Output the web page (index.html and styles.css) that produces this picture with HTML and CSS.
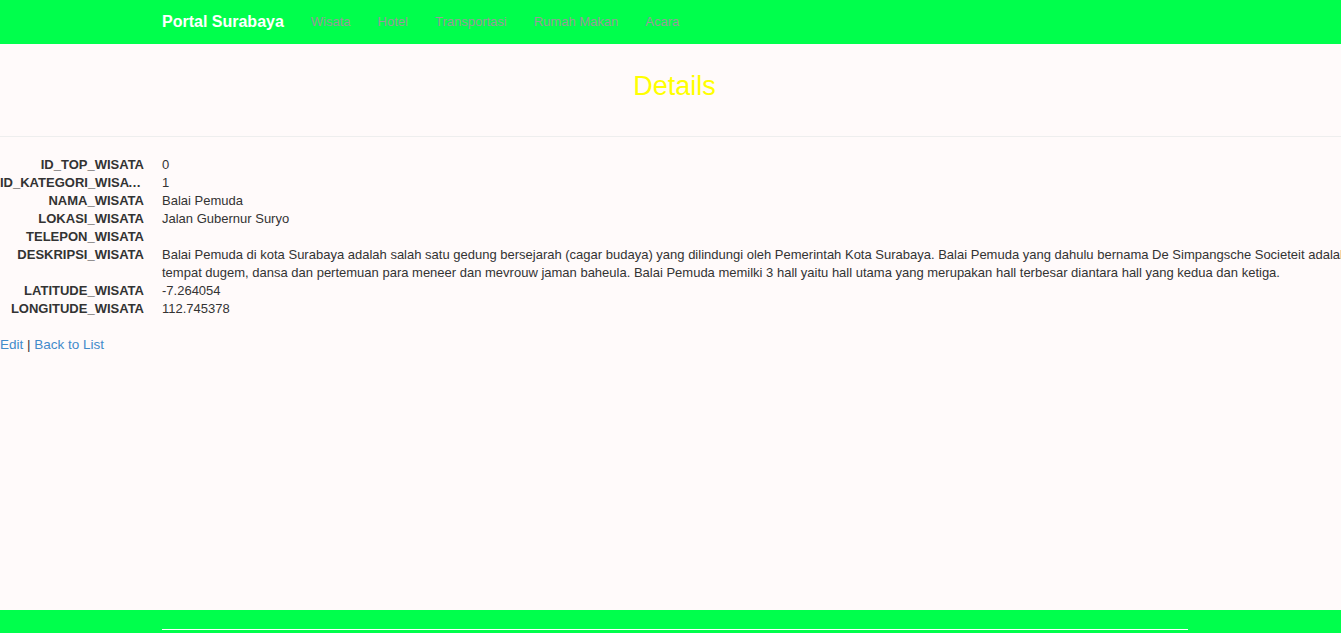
FILE: index.html
```html
<!DOCTYPE html>
<html lang="id">
<head>
<meta charset="utf-8">
<title>Details - Portal Surabaya</title>
<link rel="stylesheet" href="styles.css">
</head>
<body>
<header class="navbar">
  <div class="nav-inner">
    <a class="brand" href="#">Portal Surabaya</a>
    <ul class="nav-links">
      <li><a href="#">Wisata</a></li>
      <li><a href="#">Hotel</a></li>
      <li><a href="#">Transportasi</a></li>
      <li><a href="#">Rumah Makan</a></li>
      <li><a href="#">Acara</a></li>
    </ul>
  </div>
</header>
<main class="main">
  <div class="title-block">
    <h2 class="title">Details</h2>
  </div>
  <hr class="divider">
  <dl class="details">
    <dt>ID_TOP_WISATA</dt><dd>0</dd>
    <dt>ID_KATEGORI_WISATA</dt><dd>1</dd>
    <dt>NAMA_WISATA</dt><dd>Balai Pemuda</dd>
    <dt>LOKASI_WISATA</dt><dd>Jalan Gubernur Suryo</dd>
    <dt>TELEPON_WISATA</dt><dd></dd>
    <dt>DESKRIPSI_WISATA</dt><dd class="desc"><span class="line">Balai Pemuda di kota Surabaya adalah salah satu gedung bersejarah (cagar budaya) yang dilindungi oleh Pemerintah Kota Surabaya. Balai Pemuda yang dahulu bernama De Simpangsche Societeit adalah</span><span class="line">tempat dugem, dansa dan pertemuan para meneer dan mevrouw jaman baheula. Balai Pemuda memilki 3 hall yaitu hall utama yang merupakan hall terbesar diantara hall yang kedua dan ketiga.</span></dd>
    <dt>LATITUDE_WISATA</dt><dd>-7.264054</dd>
    <dt>LONGITUDE_WISATA</dt><dd>112.745378</dd>
  </dl>
  <p class="actions"><a href="#">Edit</a> | <a href="#">Back to List</a></p>
</main>
<footer class="footer">
  <div class="footer-line"></div>
</footer>
</body>
</html>
```
FILE: styles.css
```css
html, body {
  margin: 0;
  padding: 0;
  overflow: hidden;
}
body {
  background: #fffafa;
  font-family: "Liberation Sans", Arial, sans-serif;
  font-size: 13px;
  line-height: 18px;
  color: #333;
  min-height: 100vh;
  display: flex;
  flex-direction: column;
}
a { text-decoration: none; }

.navbar {
  background: #00ff4c;
  height: 44px;
  flex-shrink: 0;
}
.nav-inner {
  display: flex;
  align-items: center;
  height: 44px;
  padding-left: 162px;
}
.brand {
  color: #fff;
  font-weight: bold;
  font-size: 16px;
  margin-right: 27px;
}
.nav-links {
  list-style: none;
  margin: 0;
  padding: 0;
  display: flex;
  gap: 27px;
}
.nav-links a {
  color: #999;
  font-size: 13px;
}

.main { flex: 1; }
.title-block {
  padding-top: 27px;
  padding-left: 8px;
  text-align: center;
}
.title {
  margin: 0;
  font-weight: normal;
  font-size: 27px;
  line-height: 30px;
  color: #ffff00;
}
.divider {
  margin: 35px 0 0;
  border: 0;
  border-top: 1px solid #eeeeee;
  height: 0;
}
.details {
  margin: 19px 0 0;
  display: grid;
  grid-template-columns: 144px 1fr;
  column-gap: 18px;
}
.details dt {
  font-weight: bold;
  text-align: right;
  white-space: nowrap;
  overflow: hidden;
  text-overflow: ellipsis;
  min-height: 18px;
}
.details dd {
  margin: 0;
  min-height: 18px;
}
.desc .line {
  display: block;
  white-space: nowrap;
}
.actions {
  margin: 18px 0 0;
  color: #333;
  font-size: 13.5px;
}
.actions a { color: #428bca; }

.footer {
  background: #00ff4c;
  height: 23px;
  padding-top: 19px;
  box-sizing: border-box;
  flex-shrink: 0;
}
.footer-line {
  margin-left: 162px;
  width: 1026px;
  border-top: 1px solid #fff;
}
```
